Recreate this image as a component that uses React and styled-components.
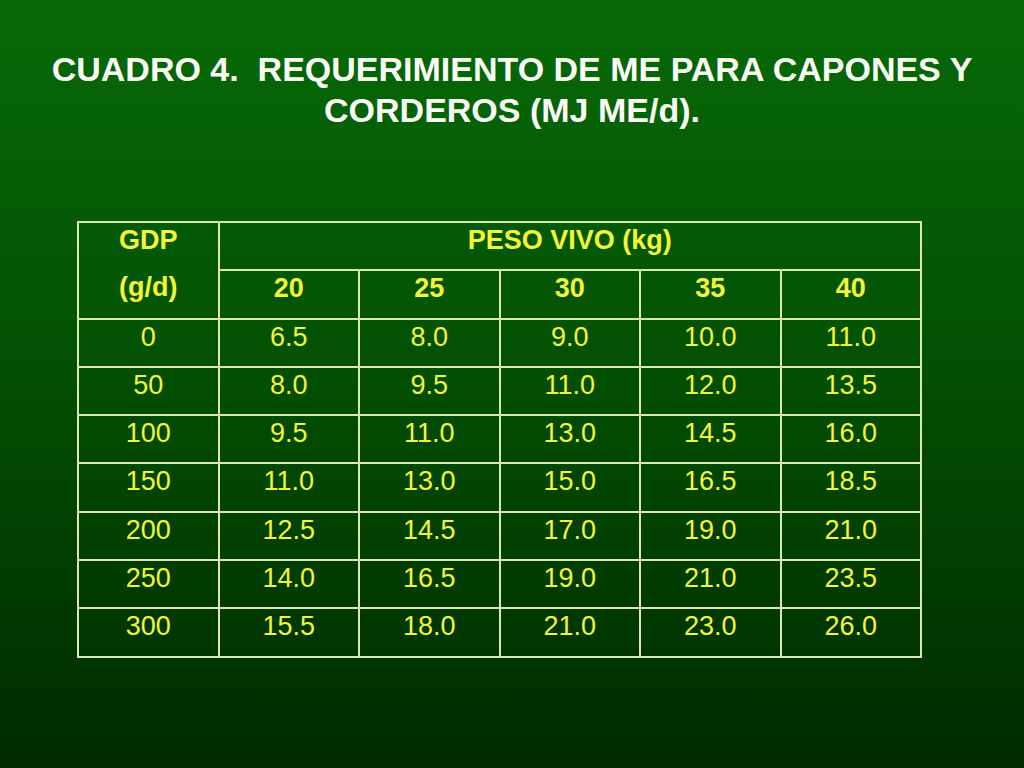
import React from 'react';
import styled, { createGlobalStyle } from 'styled-components';

const GlobalStyle = createGlobalStyle`
  html, body {
    margin: 0;
    padding: 0;
  }
`;

const Slide = styled.div`
  width: 1024px;
  height: 768px;
  box-sizing: border-box;
  background: linear-gradient(180deg, #076a07 0%, #035203 45%, #002b00 100%);
  font-family: 'Liberation Sans', Arial, sans-serif;
  display: flex;
  flex-direction: column;
  align-items: center;
  padding-top: 49px;
  overflow: hidden;
`;

const Title = styled.h1`
  margin: 0;
  color: #fbfbf6;
  font-size: 34px;
  line-height: 41px;
  font-weight: bold;
  text-align: center;
  white-space: nowrap;
`;

const Table = styled.table`
  align-self: flex-start;
  margin: 90px 0 0 77px;
  border-collapse: collapse;
  width: 845px;
  table-layout: fixed;
  color: #f4f438;
  font-size: 27px;
`;

const Row = styled.tr`
  height: 48.3px;
`;

const Cell = styled.td`
  border: 2px solid #dfe7b0;
  text-align: center;
  vertical-align: top;
  padding: 2px 0 0;
  line-height: 31px;
  font-weight: ${p => (p.$head ? 'bold' : 'normal')};
`;

const HeadLine = styled.div`
  height: 31px;
  & + & {
    margin-top: 16px;
  }
`;

const WEIGHTS = [20, 25, 30, 35, 40];

const DATA = [
  ['0', '6.5', '8.0', '9.0', '10.0', '11.0'],
  ['50', '8.0', '9.5', '11.0', '12.0', '13.5'],
  ['100', '9.5', '11.0', '13.0', '14.5', '16.0'],
  ['150', '11.0', '13.0', '15.0', '16.5', '18.5'],
  ['200', '12.5', '14.5', '17.0', '19.0', '21.0'],
  ['250', '14.0', '16.5', '19.0', '21.0', '23.5'],
  ['300', '15.5', '18.0', '21.0', '23.0', '26.0'],
];

export default function App() {
  return (
    <>
      <GlobalStyle />
      <Slide>
        <Title>
          CUADRO 4.&nbsp; REQUERIMIENTO DE ME PARA CAPONES Y
          <br />
          CORDEROS (MJ ME/d).
        </Title>
        <Table>
          <tbody>
            <Row>
              <Cell $head rowSpan={2}>
                <HeadLine>GDP</HeadLine>
                <HeadLine>(g/d)</HeadLine>
              </Cell>
              <Cell $head colSpan={5}>PESO VIVO (kg)</Cell>
            </Row>
            <Row>
              {WEIGHTS.map(w => (
                <Cell $head key={w}>{w}</Cell>
              ))}
            </Row>
            {DATA.map(row => (
              <Row key={row[0]}>
                {row.map((v, i) => (
                  <Cell key={i}>{v}</Cell>
                ))}
              </Row>
            ))}
          </tbody>
        </Table>
      </Slide>
    </>
  );
}
